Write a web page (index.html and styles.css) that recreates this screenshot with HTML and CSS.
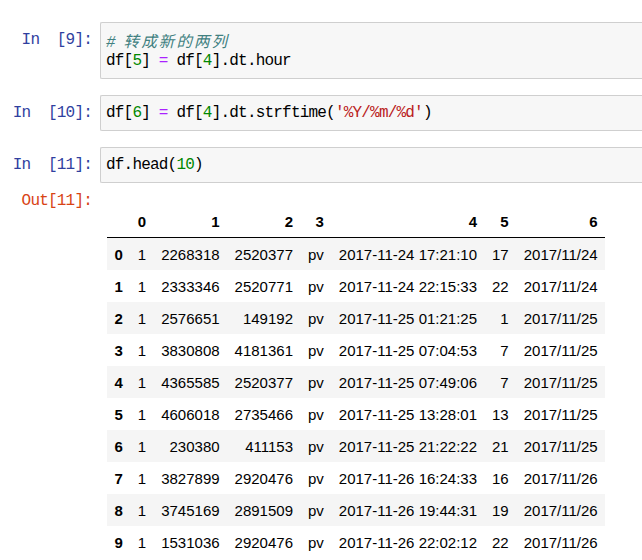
FILE: index.html
```html
<!DOCTYPE html>
<html>
<head>
<meta charset="utf-8">
<link rel="stylesheet" href="styles.css">
</head>
<body>
<div class="notebook">
  <div class="cell">
    <div class="prompt in">In&nbsp;&nbsp;[9]:</div>
    <div class="input-area"><div class="line"><span class="comment"># <span class="cjk">转成新的两列</span></span></div><div class="line">df[<span class="num">5</span>] <span class="op">=</span> df[<span class="num">4</span>].dt.hour</div></div>
  </div>
  <div class="cell">
    <div class="prompt in">In&nbsp;&nbsp;[10]:</div>
    <div class="input-area"><div class="line">df[<span class="num">6</span>] <span class="op">=</span> df[<span class="num">4</span>].dt.strftime(<span class="str">'%Y/%m/%d'</span>)</div></div>
  </div>
  <div class="cell last">
    <div class="prompt in">In&nbsp;&nbsp;[11]:</div>
    <div class="input-area"><div class="line">df.head(<span class="num">10</span>)</div></div>
  </div>
  <div class="out-cell">
    <div class="prompt out">Out[11]:</div>
    <div class="output-area">
      <table class="dataframe">
        <thead>
          <tr><th></th><th>0</th><th>1</th><th>2</th><th>3</th><th>4</th><th>5</th><th>6</th></tr>
        </thead>
        <tbody>
          <tr><th>0</th><td>1</td><td>2268318</td><td>2520377</td><td>pv</td><td>2017-11-24 17:21:10</td><td>17</td><td>2017/11/24</td></tr>
          <tr><th>1</th><td>1</td><td>2333346</td><td>2520771</td><td>pv</td><td>2017-11-24 22:15:33</td><td>22</td><td>2017/11/24</td></tr>
          <tr><th>2</th><td>1</td><td>2576651</td><td>149192</td><td>pv</td><td>2017-11-25 01:21:25</td><td>1</td><td>2017/11/25</td></tr>
          <tr><th>3</th><td>1</td><td>3830808</td><td>4181361</td><td>pv</td><td>2017-11-25 07:04:53</td><td>7</td><td>2017/11/25</td></tr>
          <tr><th>4</th><td>1</td><td>4365585</td><td>2520377</td><td>pv</td><td>2017-11-25 07:49:06</td><td>7</td><td>2017/11/25</td></tr>
          <tr><th>5</th><td>1</td><td>4606018</td><td>2735466</td><td>pv</td><td>2017-11-25 13:28:01</td><td>13</td><td>2017/11/25</td></tr>
          <tr><th>6</th><td>1</td><td>230380</td><td>411153</td><td>pv</td><td>2017-11-25 21:22:22</td><td>21</td><td>2017/11/25</td></tr>
          <tr><th>7</th><td>1</td><td>3827899</td><td>2920476</td><td>pv</td><td>2017-11-26 16:24:33</td><td>16</td><td>2017/11/26</td></tr>
          <tr><th>8</th><td>1</td><td>3745169</td><td>2891509</td><td>pv</td><td>2017-11-26 19:44:31</td><td>19</td><td>2017/11/26</td></tr>
          <tr><th>9</th><td>1</td><td>1531036</td><td>2920476</td><td>pv</td><td>2017-11-26 22:02:12</td><td>22</td><td>2017/11/26</td></tr>
        </tbody>
      </table>
    </div>
  </div>
</div>
</body>
</html>
```
FILE: styles.css
```css
html, body {
  margin: 0;
  padding: 0;
  background: #ffffff;
  overflow: hidden;
}

.notebook {
  padding-top: 22px;
}

.cell {
  display: flex;
  align-items: flex-start;
  margin-bottom: 16px;
}

.cell.last {
  margin-bottom: 0;
}

.prompt {
  width: 100px;
  flex: none;
  box-sizing: border-box;
  padding: 8px 8px 0 0;
  text-align: right;
  font-family: "Liberation Mono", "DejaVu Sans Mono", monospace;
  font-size: 16px;
  letter-spacing: -0.8px;
  line-height: 21px;
  white-space: nowrap;
}

.prompt.in {
  color: #303F9F;
}

.prompt.out {
  color: #D84315;
}

.input-area {
  flex: 1;
  min-width: 0;
  box-sizing: border-box;
  background: #f7f7f7;
  border: 1px solid #cfcfcf;
  border-right: none;
  border-radius: 2px 0 0 2px;
  padding: 7px 5px 6px;
  font-family: "Liberation Mono", "DejaVu Sans Mono", monospace;
  font-size: 16px;
  letter-spacing: -0.8px;
  line-height: 21px;
  color: #000000;
  white-space: pre;
  overflow: hidden;
}

.line {
  height: 21px;
}

.comment {
  color: #408080;
  font-style: italic;
}

.cjk {
  font-family: "Noto Sans CJK SC", sans-serif;
  font-size: 15.5px;
  letter-spacing: 2.1px;
}

.num {
  color: #008800;
}

.op {
  color: #AA22FF;
}

.str {
  color: #BA2121;
}

.out-cell {
  display: flex;
  align-items: flex-start;
}

.output-area {
  padding: 22px 0 0 7px;
}

.dataframe {
  border-collapse: collapse;
  border-spacing: 0;
  font-family: "Liberation Sans", Arial, sans-serif;
  font-size: 15px;
  color: #000000;
}

.dataframe th,
.dataframe td {
  padding: 7.5px 7.5px;
  line-height: 17px;
  text-align: right;
  vertical-align: middle;
  white-space: nowrap;
}

.dataframe th {
  font-weight: bold;
}

.dataframe thead th {
  border-bottom: 1px solid #000000;
}

.dataframe tbody tr:nth-child(odd) {
  background: #f5f5f5;
}
```
